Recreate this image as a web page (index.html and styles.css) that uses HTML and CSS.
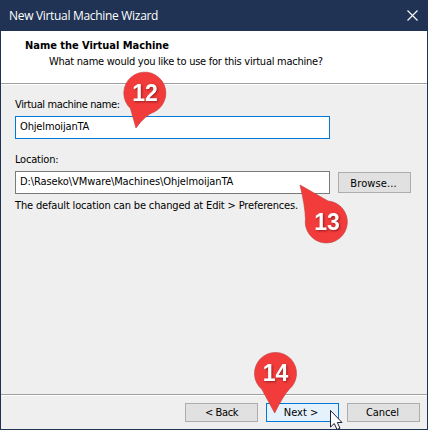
FILE: index.html
```
<!DOCTYPE html>
<html lang="en">
<head>
<meta charset="utf-8">
<title>New Virtual Machine Wizard</title>
<link rel="stylesheet" href="styles.css">
</head>
<body>
<main class="window">
  <header class="titlebar">
    <span class="caption">New Virtual Machine Wizard</span>
    <svg class="close" width="11" height="11" viewBox="0 0 11 11"><path d="M.5.5l10 10M10.5.5l-10 10"/></svg>
  </header>
  <section class="heading">
    <h1><span class="t-head">Name the Virtual Machine</span></h1>
    <p><span class="t-sub">What name would you like to use for this virtual machine?</span></p>
  </section>
  <section class="form">
    <div class="label"><span class="t-name">Virtual machine name:</span></div>
    <div class="field focused"><span class="t-value">OhjelmoijanTA</span></div>
    <div class="label second"><span class="t-loc">Location:</span></div>
    <div class="row">
      <div class="field"><span class="t-path">D:\Raseko\VMware\Machines\OhjelmoijanTA</span></div>
      <div class="button browse"><span class="t-browse">Browse...</span></div>
    </div>
    <div class="hint"><span class="t-hint">The default location can be changed at Edit &gt; Preferences.</span></div>
  </section>
  <footer class="actions">
    <div class="button"><span class="t-back">&lt; Back</span></div>
    <div class="button primary"><span class="t-next">Next &gt;</span></div>
    <div class="button"><span class="t-cancel">Cancel</span></div>
  </footer>
</main>
<svg class="overlay" width="428" height="430" viewBox="0 0 428 430">
  <g class="pins">
    <path d="M136 128L130.500 108.500A21 21 0 1 1 155 111.500Q145 115 136 128Z"/>
    <path d="M300 185L328 201A21 21 0 1 1 305.500 219Q305 205 300 185Z"/>
    <path d="M274.700 413L262 389.500A21 21 0 1 1 289 389.500Q283 396 274.700 413Z"/>
  </g>
  <g class="numbers">
    <text x="145" y="101">12</text>
    <text x="327" y="230">13</text>
    <text x="275.500" y="381">14</text>
  </g>
  <path class="cursor" d="M330.500 410.500V427L334.300 423.500L337 429.500L340 428.200L337.300 422.500H342Z"/>
</svg>
</body>
</html>
```
FILE: styles.css
```
* { box-sizing: border-box; }
body { margin: 0; overflow: hidden; }
.window {
  width: 428px; height: 430px;
  display: flex; flex-direction: column;
  border: solid #203354; border-width: 0 1px 1px;
  background: #efefef; color: #000;
  font: 11px/16px "DejaVu Sans Condensed", "DejaVu Sans", sans-serif;
  font-stretch: condensed;
  white-space: nowrap;
}
.titlebar {
  height: 31px; flex: none;
  display: flex; align-items: center; justify-content: space-between;
  padding: 0 9px 1px 8px;
  background: #203354; color: #fff;
}
.caption { font: 12px/16px "Open Sans", sans-serif; letter-spacing: -.31px; padding-top: 2px; }
.close { fill: none; stroke: #fff; stroke-width: 1.1; }
.heading {
  height: 54px; flex: none; padding-top: 6px;
  background: #fff; border-bottom: 1px solid #fff;
  box-shadow: inset 0 -1px #a0a0a0;
}
.heading h1 { margin: 0 0 0 24px; font-size: 11px; line-height: 17px; font-weight: 700; letter-spacing: -.04px; }
.heading p { margin: 0 0 0 48px; }
.t-sub { letter-spacing: -.26px; }
.t-name { letter-spacing: -.37px; }
.t-value { letter-spacing: -.15px; }
.t-loc { letter-spacing: -.2px; }
.t-path { letter-spacing: -.09px; }
.t-browse { padding: 2px 2px 0 0; letter-spacing: .1px; }
.t-hint { letter-spacing: -.16px; }
.t-back { letter-spacing: -.4px; }
.t-cancel { padding-right: 2px; letter-spacing: -.1px; }
.form { flex: 1; padding: 12px 16px 0 14px; }
.label { height: 19px; }
.second { margin-top: 13px; }
.row { display: flex; gap: 8px; align-items: center; }
.field { width: 315px; height: 23px; border: 1px solid #7a7a7a; background: #fff; padding: 2px 4px; }
.focused { border-color: #0078d7; }
.button {
  width: 73px; height: 19px;
  display: flex; align-items: center; justify-content: center;
  background: #e1e1e1; border: 1px solid #adadad;
}
.browse { height: 21px; }
.primary { background: #e5f1fb; border-color: #0078d7; }
.primary span { margin-right: 3px; }
.hint { margin-top: 4px; }
.actions {
  height: 35px; flex: none;
  display: flex; justify-content: flex-end; gap: 8px;
  padding: 8px 7px 0 0;
  border-top: 1px solid #a0a0a0; box-shadow: inset 0 1px #fff;
}
.overlay { position: absolute; left: 0; top: 0; }
.pins { fill: #f23b3b; stroke: #d34545; stroke-width: .5; filter: drop-shadow(0 .5px .5px rgba(0,0,0,.3)); }
.numbers { fill: #fff; font: 700 23px "Liberation Sans", sans-serif; text-anchor: middle; filter: drop-shadow(1px 1px 1px rgba(60,0,0,.5)); }
.cursor { fill: #fff; stroke: #182238; stroke-width: 1; }
```
